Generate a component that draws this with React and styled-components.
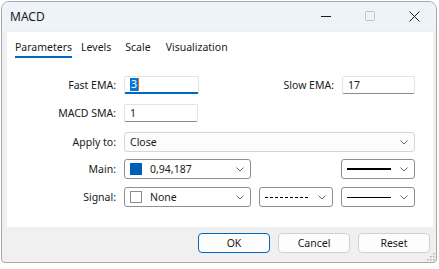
import React from 'react';
import styled, { createGlobalStyle } from 'styled-components';

const GlobalStyle = createGlobalStyle`
  html, body {
    margin: 0;
    padding: 0;
    background: #ffffff;
    font-family: "Noto Sans", "Open Sans", sans-serif;
    font-size: 10.5px;
    color: #1a1a1a;
  }
`;

const Page = styled.div`
  width: 439px;
  height: 269px;
  padding: 1px 0 0 1px;
  box-sizing: border-box;
`;

const Window = styled.div`
  width: 436px;
  height: 262px;
  box-sizing: border-box;
  border: 1px solid #a9a9a9;
  border-radius: 8px 8px 4px 4px;
  background: #f0f0f0;
  display: flex;
  flex-direction: column;
  overflow: hidden;
  position: relative;
`;

const TitleBar = styled.div`
  height: 28px;
  background: #eef3f9;
  display: flex;
  align-items: center;
  padding-left: 8px;
  flex-shrink: 0;
`;

const Title = styled.div`
  font-size: 12px;
  color: #1b1b1b;
  flex: 1;
  margin-top: 1px;
`;

const Controls = styled.div`
  display: flex;
  height: 100%;
`;

const Ctrl = styled.div`
  width: 44px;
  height: 100%;
  display: flex;
  align-items: center;
  justify-content: center;
`;

const Panel = styled.div`
  margin: 2px 3px 0 5px;
  height: 195px;
  background: #ffffff;
  display: flex;
  flex-direction: column;
`;

const Tabs = styled.div`
  display: flex;
  padding-left: 8px;
`;

const Tab = styled.div`
  padding: 7px 0 1px;
  line-height: 16px;
  border-bottom: 2px solid ${p => (p.$active ? '#0067c0' : 'transparent')};
  color: #1a1a1a;
  margin-right: ${p => p.$gap || 0}px;
`;

const Form = styled.div`
  display: flex;
  flex-direction: column;
  margin-top: 18px;
  padding-right: 18px;
`;

const Row = styled.div`
  display: flex;
  align-items: center;
  gap: 8px;
  margin-top: ${p => p.$top || 0}px;
`;

const Label = styled.div`
  width: ${p => p.$w || 109}px;
  text-align: right;
  margin-left: ${p => (p.$push ? 'auto' : '0')};
  white-space: nowrap;
`;

const TextBox = styled.div`
  width: ${p => p.$w}px;
  height: 18px;
  box-sizing: border-box;
  border: 1px solid #e3e3e3;
  border-bottom: ${p => (p.$focus ? '2px solid #0067c0' : '1px solid #8a8a8a')};
  border-radius: 2px;
  padding-left: 5px;
  display: flex;
  align-items: center;
`;

const Selected = styled.span`
  background: #0078d7;
  color: #ffffff;
  padding: 0 1px;
  line-height: 13px;
`;

const Caret = styled.span`
  width: 1px;
  height: 13px;
  background: #e06c1a;
`;

const Combo = styled.div`
  width: ${p => p.$w}px;
  height: 20px;
  box-sizing: border-box;
  border: 1px solid ${p => (p.$light ? '#d6d6d6' : '#8f8f8f')};
  border-radius: 3px;
  background: ${p => (p.$light ? '#fcfcfc' : '#ffffff')};
  display: flex;
  align-items: center;
  padding: 0 6px 0 5px;
  gap: 8px;
  margin-left: ${p => (p.$push ? 'auto' : '0')};
`;

const ComboText = styled.div`
  flex: 1;
  display: flex;
  align-items: center;
`;

const Swatch = styled.div`
  width: 12px;
  height: 12px;
  box-sizing: border-box;
  border: 1px solid ${p => (p.$color ? p.$color : '#8a8a8a')};
  background: ${p => p.$color || '#ffffff'};
  margin-right: 8px;
`;

const Footer = styled.div`
  flex: 1;
  display: flex;
  justify-content: flex-end;
  align-items: flex-start;
  gap: 8px;
  padding: 6px 6px 0 0;
`;

const Button = styled.div`
  width: 72px;
  height: 20px;
  box-sizing: border-box;
  border: 1px solid ${p => (p.$primary ? '#0067c0' : '#d0d0d0')};
  border-radius: 4px;
  background: #fdfdfd;
  display: flex;
  align-items: center;
  justify-content: center;
  color: #1a1a1a;
`;

const Grip = styled.svg`
  position: absolute;
  right: 1px;
  bottom: 1px;
`;

const Chevron = () => (
  <svg width="8" height="5" viewBox="0 0 8 5">
    <path d="M0.5 0.5 L4 4 L7.5 0.5" fill="none" stroke="#666" strokeWidth="1" />
  </svg>
);

const LineSample = ({ dash, width }) => (
  <svg width="44" height="5" viewBox="0 0 44 5">
    <line x1="0" y1={width === 2 ? 2 : 2.5} x2="44" y2={width === 2 ? 2 : 2.5} stroke="#000" strokeWidth={width}
      strokeDasharray={dash ? '3 2' : undefined} />
  </svg>
);

export default function App() {
  return (
    <Page>
      <GlobalStyle />
      <Window>
        <TitleBar>
          <Title>MACD</Title>
          <Controls>
            <Ctrl>
              <svg width="10" height="10" viewBox="0 0 10 10">
                <line x1="0" y1="5.5" x2="10" y2="5.5" stroke="#1b1b1b" strokeWidth="1" />
              </svg>
            </Ctrl>
            <Ctrl>
              <svg width="10" height="10" viewBox="0 0 10 10">
                <rect x="0.5" y="0.5" width="9" height="9" rx="1" fill="none" stroke="#c2c2c2" />
              </svg>
            </Ctrl>
            <Ctrl>
              <svg width="11" height="11" viewBox="0 0 11 11">
                <path d="M0.5 0.5 L10.5 10.5 M10.5 0.5 L0.5 10.5" stroke="#1b1b1b" strokeWidth="1" />
              </svg>
            </Ctrl>
          </Controls>
        </TitleBar>
        <Panel>
          <Tabs>
            <Tab $active $gap={9}>Parameters</Tab>
            <Tab $gap={14}>Levels</Tab>
            <Tab $gap={15}>Scale</Tab>
            <Tab>Visualization</Tab>
          </Tabs>
          <Form>
            <Row>
              <Label>Fast EMA:</Label>
              <TextBox $w={75} $focus><Selected>3</Selected><Caret /></TextBox>
              <Label $w={60} $push>Slow EMA:</Label>
              <TextBox $w={73}>17</TextBox>
            </Row>
            <Row $top={10}>
              <Label>MACD SMA:</Label>
              <TextBox $w={74}>1</TextBox>
            </Row>
            <Row $top={10}>
              <Label>Apply to:</Label>
              <Combo $w={291} $light><ComboText>Close</ComboText><Chevron /></Combo>
            </Row>
            <Row $top={7}>
              <Label>Main:</Label>
              <Combo $w={127}>
                <ComboText><Swatch $color="#005ebb" />0,94,187</ComboText>
                <Chevron />
              </Combo>
              <Combo $w={74} $push>
                <ComboText><LineSample width={2} /></ComboText>
                <Chevron />
              </Combo>
            </Row>
            <Row $top={8}>
              <Label>Signal:</Label>
              <Combo $w={127}>
                <ComboText><Swatch />None</ComboText>
                <Chevron />
              </Combo>
              <Combo $w={74}>
                <ComboText><LineSample dash width={1} /></ComboText>
                <Chevron />
              </Combo>
              <Combo $w={74}>
                <ComboText><LineSample width={1} /></ComboText>
                <Chevron />
              </Combo>
            </Row>
          </Form>
        </Panel>
        <Footer>
          <Button $primary>OK</Button>
          <Button>Cancel</Button>
          <Button>Reset</Button>
        </Footer>
        <Grip width="9" height="9" viewBox="0 0 9 9">
          {[[7, 1], [7, 4], [4, 4], [7, 7], [4, 7], [1, 7]].map(([x, y]) => (
            <rect key={`${x}-${y}`} x={x} y={y} width="1.5" height="1.5" fill="#b0b0b0" />
          ))}
        </Grip>
      </Window>
    </Page>
  );
}
